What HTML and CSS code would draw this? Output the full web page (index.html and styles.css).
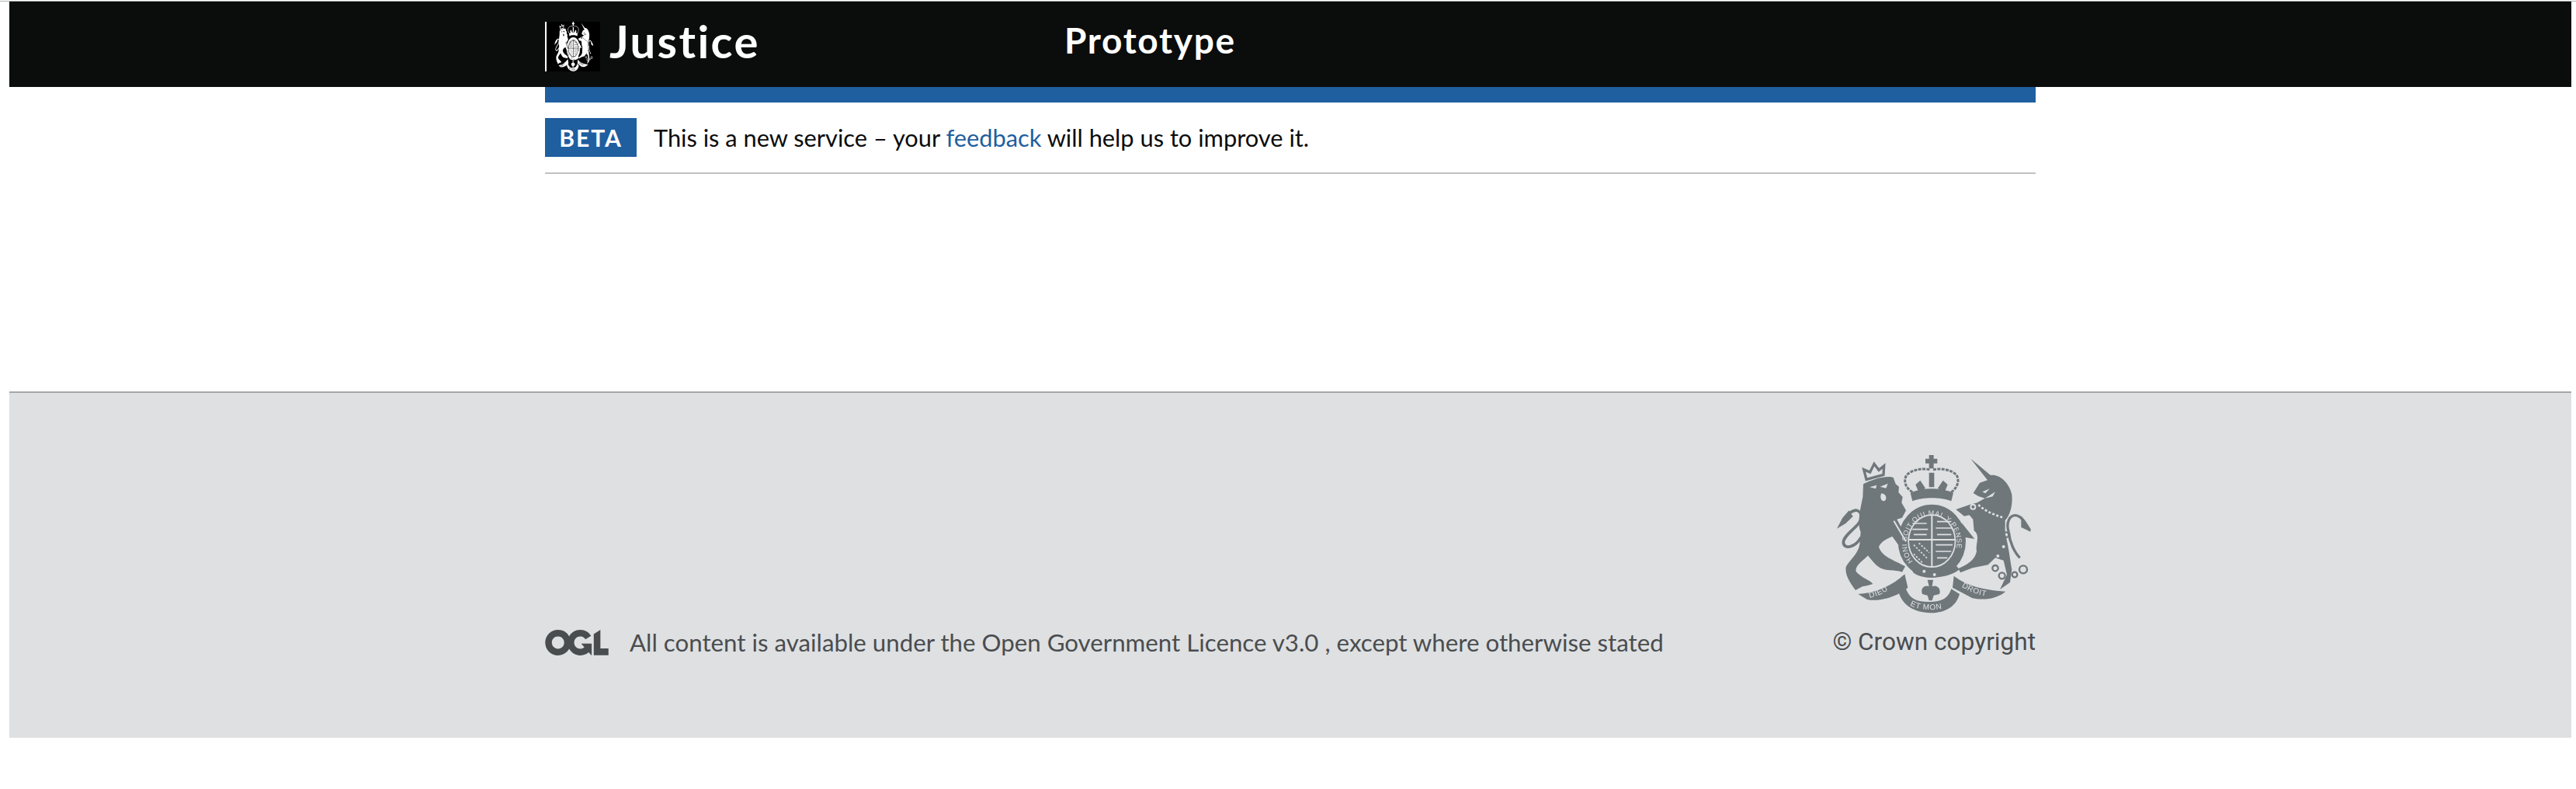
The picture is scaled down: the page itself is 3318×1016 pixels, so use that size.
FILE: index.html
```html
<!DOCTYPE html>
<html lang="en">
<head>
<meta charset="utf-8">
<title>Justice Prototype</title>
<link rel="stylesheet" href="styles.css">
</head>
<body>
<svg class="defs" width="0" height="0" aria-hidden="true">
  <defs>
    <symbol id="crest" viewBox="78 48 750 612" preserveAspectRatio="none">
      <!-- lion -->
      <path class="fill" d="M180 160C215 140 275 125 296 135L305 160L318 170L316 192L332 210L328 232L345 262L330 290L310 296L350 372L318 398L292 362C270 372 250 380 240 402C250 440 295 452 342 478L330 500C300 490 270 497 245 484C225 472 208 448 198 436C182 455 148 472 152 498C172 522 205 530 217 546L196 552L176 556L150 570C128 540 108 510 113 480C128 450 160 432 166 392L170 345C155 310 170 250 178 210Z"/>
      <path class="line" stroke-width="11" d="M172 365C150 405 105 415 103 385C105 350 178 320 172 282C165 250 130 258 116 290"/>
      <path class="fill" d="M78 332L100 290L125 262L140 285L112 312Z"/>
      <path class="line" stroke-width="10" d="M192 142L182 104L206 114L222 82L240 106L260 90L258 124Z"/>
      <path class="cut" d="M245 170L275 158L268 176ZM205 172L232 164L228 178ZM250 196C270 196 274 222 260 226C246 226 244 206 250 196Z"/>
      <!-- unicorn -->
      <path class="fill" d="M595 62L672 126C700 120 742 148 754 200C758 240 748 280 728 300L728 350C742 400 748 460 754 490L747 540L708 567L735 510L722 455L690 445L662 472L602 484L555 502L548 486C588 470 612 450 618 420C612 392 634 360 608 340L604 296L590 280L570 284L538 258L590 240L620 232L650 215L625 207L605 195L630 155L660 145Z"/>
      <path class="line" stroke-width="10" d="M742 345C730 310 745 275 775 282C800 290 810 320 825 340"/>
      <path class="line" stroke-width="10" d="M742 345C745 385 765 425 785 445"/>
      <path class="fill" d="M790 283L828 345L790 327Z"/>
      <path class="cutline" stroke-width="8" stroke-dasharray="9 7" d="M625 240C650 265 690 280 722 290"/>
      <path class="cut" d="M640 190L668 178L652 196ZM650 215L690 190L680 208Z"/>
      <g class="line" stroke-width="7">
        <circle cx="690" cy="485" r="11"/><circle cx="716" cy="514" r="12"/><circle cx="765" cy="510" r="10"/><circle cx="798" cy="490" r="15"/><circle cx="732" cy="356" r="10"/>
      </g>
      <circle class="cutline" stroke-width="6" cx="604" cy="248" r="9"/>
      <circle class="cut" cx="722" cy="402" r="6"/><circle class="cut" cx="700" cy="438" r="6"/>
      <!-- royal crown -->
      <path class="fill" d="M434 48H452V62H466V80H452V100H434V80H420V62H434Z"/>
      <path class="line" stroke-width="9" stroke-dasharray="12 4" d="M436 104C405 98 368 105 348 125C332 148 345 178 372 192M450 104C482 98 522 105 540 125C554 148 542 178 518 192"/>
      <path class="fill" d="M434 116H454V172H434ZM382 162L400 146L420 176L395 194ZM506 162L488 146L468 176L493 194Z"/>
      <path class="fill" d="M362 194C410 172 480 172 528 194L520 226C480 210 410 210 370 226Z"/>
      <!-- garter and shield -->
      <ellipse class="ring" cx="445" cy="380" rx="112" ry="122" stroke-width="38"/>
      <ellipse class="fill" cx="445" cy="380" rx="88" ry="98"/>
      <path id="garter" class="none" d="M375 462A97 107 0 1 1 515 462"/>
      <text class="motto garter"><textPath href="#garter" startOffset="1%">HONI SOIT QUI MAL Y PENSE</textPath></text>
      <path class="cutline" stroke-width="6" d="M445 280V480M355 375H535"/>
      <path class="cutline" stroke-width="5" d="M370 312H425M370 335H430M375 355H425M465 305H520M460 330H525M465 355H520M460 395H525M460 420H520M465 445H505"/>
      <path class="cutline" stroke-width="5" stroke-dasharray="7 6" d="M375 395L430 450M375 430L410 465M395 388L435 425"/>
      <!-- base and compartment -->
      <path class="fill" d="M360 468C390 500 500 500 532 468L552 490C500 530 400 530 372 500Z"/>
      <circle class="cut" cx="415" cy="497" r="6"/><circle class="cut" cx="455" cy="510" r="6"/>
      <path class="cutline" stroke-width="6" d="M298 302L345 382"/>
      <path class="fill" d="M560 310L610 372L570 365L548 340Z"/>
      <!-- fleur-de-lis -->
      <path class="fill" d="M428 530H450L446 555C465 548 482 565 474 585L452 590L446 610H434L428 590L408 585C400 565 415 548 434 555Z"/>
      <!-- ribbons -->
      <path class="fill" d="M160 585C235 580 295 550 340 508L352 560C305 600 235 615 195 606Z"/>
      <path class="fill" d="M530 515C590 560 660 570 730 575C700 600 650 612 600 600L525 560Z"/>
      <path class="fill" d="M318 582C335 630 375 655 440 658C500 658 540 630 552 585L520 565C505 610 470 615 430 615C390 615 360 605 345 565Z"/>
      <path id="rib-left" class="none" d="M205 600C250 590 285 565 325 530"/>
      <path id="rib-mid" class="none" d="M360 628C400 652 490 652 530 622"/>
      <path id="rib-right" class="none" d="M560 556C595 580 640 595 690 596"/>
      <text class="motto ribbon"><textPath href="#rib-left">DIEU</textPath></text>
      <text class="motto ribbon"><textPath href="#rib-mid">ET MON</textPath></text>
      <text class="motto ribbon"><textPath href="#rib-right">DROIT</textPath></text>
    </symbol>
  </defs>
</svg>

<div class="top-rule"></div>
<div class="page">
  <header class="site-header">
    <div class="container header-row">
      <a class="org" href="#">
        <span class="org-mark"><svg class="org-crest" aria-hidden="true"><use href="#crest"/></svg></span>
        <span class="org-name">Justice</span>
      </a>
      <a class="service-name" href="#">Prototype</a>
    </div>
  </header>

  <div class="container">
    <div class="accent-bar"></div>
    <div class="phase-banner">
      <strong class="phase-tag">BETA</strong>
      <span class="phase-text">This is a new service – your <a href="#">feedback</a> will help us to improve it.</span>
    </div>
  </div>

  <main class="content"></main>

  <footer class="site-footer">
    <div class="container footer-row">
      <div class="licence">
        <svg class="ogl" viewBox="0 0 483.2 195.7" aria-hidden="true"><path fill="currentColor" d="M421.5 142.8V.1l-50.7 32.3v161.1h112.4v-50.7zm-122.3-9.6A47.12 47.12 0 0 1 221 97.8c0-26 21.1-47.1 47.1-47.1 16.7 0 31.4 8.7 39.7 21.8l42.7-27.2A97.63 97.63 0 0 0 268.1 0c-36.5 0-68.3 20.1-85.1 49.7A98 98 0 0 0 97.8 0C43.9 0 0 43.9 0 97.8s43.9 97.8 97.8 97.8c36.5 0 68.3-20.1 85.1-49.7a97.76 97.76 0 0 0 149.6 25.4l19.4 22.2h3v-87.8h-80l24.3 27.5zM97.8 145c-26 0-47.1-21.1-47.1-47.1s21.1-47.1 47.1-47.1 47.2 21 47.2 47S123.8 145 97.8 145"/></svg>
        <span class="licence-text">All content is available under the Open Government Licence v3.0 , except where otherwise stated</span>
      </div>
      <div class="copyright">
        <svg class="footer-crest" aria-hidden="true"><use href="#crest"/></svg>
        <span class="copyright-text">© Crown copyright</span>
      </div>
    </div>
  </footer>
</div>
</body>
</html>
```
FILE: styles.css
```css
* { box-sizing: border-box; }

body {
  margin: 0;
  padding-top: 1px;
  background: #fff;
  color: #0b0c0c;
  font-family: Lato, "Noto Sans", Arial, sans-serif;
  font-size: 30.8px;
  font-variant-ligatures: none;
}

.defs { display: block; height: 0; }

.top-rule { height: 1px; background: #b1b4b6; }

.page { padding: 0 6px 0 12px; }

.container { width: 1920px; margin: 0 auto; }

/* header */
.site-header { height: 110px; background: #0b0c0c; }

.header-row { display: flex; align-items: flex-start; height: 110px; padding-top: 22px; }

.org {
  display: flex;
  align-items: flex-start;
  width: 669px;
  color: #fff;
  text-decoration: none;
}

.org-mark {
  display: flex;
  justify-content: center;
  width: 71px;
  height: 64px;
  margin-top: 4px;
  background: #000;
  border-left: 2px solid #fff;
}

.org-crest { width: 50px; height: 64px; color: #fff; --cut: #000; filter: blur(0.4px); }

.org-name {
  margin-left: 12px;
  font-size: 58px;
  font-weight: 700;
  line-height: 1;
  letter-spacing: 2.4px;
}

.service-name {
  margin-top: 5px;
  color: #fff;
  font-size: 46px;
  font-weight: 700;
  line-height: 1;
  letter-spacing: 1.7px;
  text-decoration: none;
}

/* symbol parts */
.fill { fill: currentColor; }
.line { fill: none; stroke: currentColor; }
.ring { fill: none; stroke: currentColor; }
.cut { fill: var(--cut); }
.cutline { fill: none; stroke: var(--cut); }
.none { fill: none; }
.motto { fill: var(--cut); font-family: "Liberation Sans", sans-serif; }
.garter { font-size: 27px; letter-spacing: 1.5px; }
.ribbon { font-size: 30px; letter-spacing: 2px; }

/* phase banner */
.accent-bar { height: 20px; background: #1f5e9f; }

.phase-banner {
  display: flex;
  align-items: center;
  height: 92px;
  padding: 20px 0;
  border-bottom: 2px solid #bfc1c3;
}

.phase-tag {
  width: 118px;
  height: 50px;
  margin-right: 22px;
  background: #1f5e9f;
  color: #fff;
  font-size: 30px;
  font-weight: 700;
  line-height: 50px;
  letter-spacing: 2px;
  text-align: center;
}

.phase-text a { color: #1f5e9f; text-decoration: none; }

.content { height: 280px; }

/* footer */
.site-footer {
  height: 446px;
  padding-top: 80px;
  background: #dee0e2;
  border-top: 2px solid #a5a9ab;
  color: #4a4d4f;
}

.footer-row { display: flex; justify-content: space-between; align-items: flex-end; }

.licence { display: flex; align-items: center; height: 48px; }

.ogl { width: 82px; height: 33px; margin-right: 27px; color: #4a4d4f; }

.licence-text { font-size: 31.25px; }

.copyright { display: flex; flex-direction: column; align-items: center; }

.footer-crest { display: block; width: 250px; height: 204px; margin-bottom: 13px; color: #6f777b; --cut: #dee0e2; filter: blur(0.4px); }

.copyright-text { font-family: Roboto, sans-serif; font-size: 31.6px; line-height: 48px; }
```
